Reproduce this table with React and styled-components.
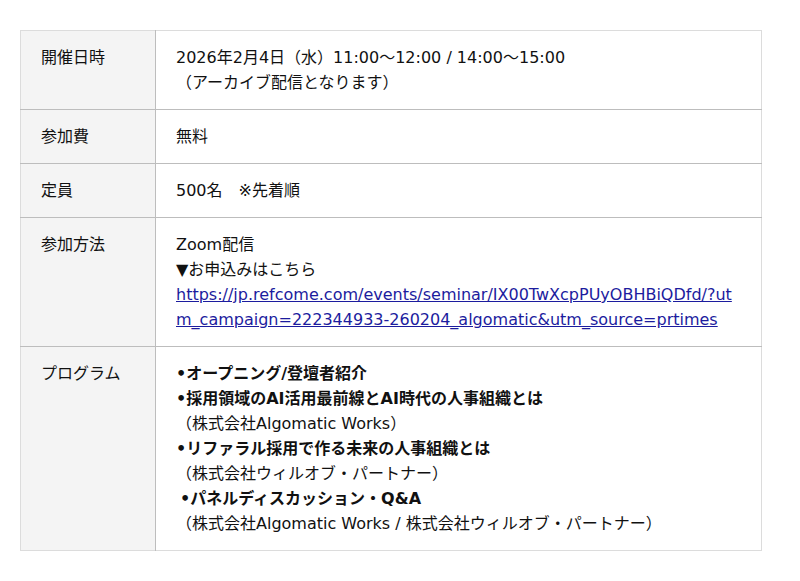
import React from "react";
import styled, { createGlobalStyle } from "styled-components";

const GlobalStyle = createGlobalStyle`
  body {
    margin: 0;
    background: #fff;
    font-family: "DejaVu Sans", "Noto Sans CJK JP", sans-serif;
    color: #111;
  }
`;

const Page = styled.div`
  padding: 30px 20px;
`;

const Table = styled.table`
  width: 742px;
  border-collapse: collapse;
  border: 1px solid #dcdcdc;
  font-size: 16px;
  line-height: 25px;

  tr + tr > * {
    border-top: 1px solid #bdbdbd;
  }
`;

const Label = styled.th`
  width: 94px;
  padding: 14px 20px;
  background: #f4f4f4;
  border-right: 1px solid #bdbdbd;
  font-weight: normal;
  text-align: left;
  vertical-align: top;
`;

const Value = styled.td`
  padding: 14px 20px;
  vertical-align: top;
  text-align: left;
`;

const Line = styled.div`
  font-weight: ${(p) => (p.bold ? "bold" : "normal")};
  padding-left: ${(p) => (p.indent ? "4px" : "0")};
`;

const Link = styled.a`
  color: #1c1c9e;
  text-decoration: underline;
  word-break: break-all;
`;

const url =
  "https://jp.refcome.com/events/seminar/IX00TwXcpPUyOBHBiQDfd/?utm_campaign=222344933-260204_algomatic&utm_source=prtimes";

export default function App() {
  return (
    <Page>
      <GlobalStyle />
      <Table>
        <tbody>
          <tr>
            <Label>開催日時</Label>
            <Value>
              <Line>2026年2月4日（水）11:00〜12:00 / 14:00〜15:00</Line>
              <Line>（アーカイブ配信となります）</Line>
            </Value>
          </tr>
          <tr>
            <Label>参加費</Label>
            <Value>無料</Value>
          </tr>
          <tr>
            <Label>定員</Label>
            <Value>500名　※先着順</Value>
          </tr>
          <tr>
            <Label>参加方法</Label>
            <Value>
              <Line>Zoom配信</Line>
              <Line>▼お申込みはこちら</Line>
              <Line>
                <Link href={url}>{url}</Link>
              </Line>
            </Value>
          </tr>
          <tr>
            <Label>プログラム</Label>
            <Value>
              <Line bold>•オープニング/登壇者紹介</Line>
              <Line bold>•採用領域のAI活用最前線とAI時代の人事組織とは</Line>
              <Line>（株式会社Algomatic Works）</Line>
              <Line bold>•リファラル採用で作る未来の人事組織とは</Line>
              <Line>（株式会社ウィルオブ・パートナー）</Line>
              <Line bold indent>•パネルディスカッション・Q&amp;A</Line>
              <Line>（株式会社Algomatic Works / 株式会社ウィルオブ・パートナー）</Line>
            </Value>
          </tr>
        </tbody>
      </Table>
    </Page>
  );
}
